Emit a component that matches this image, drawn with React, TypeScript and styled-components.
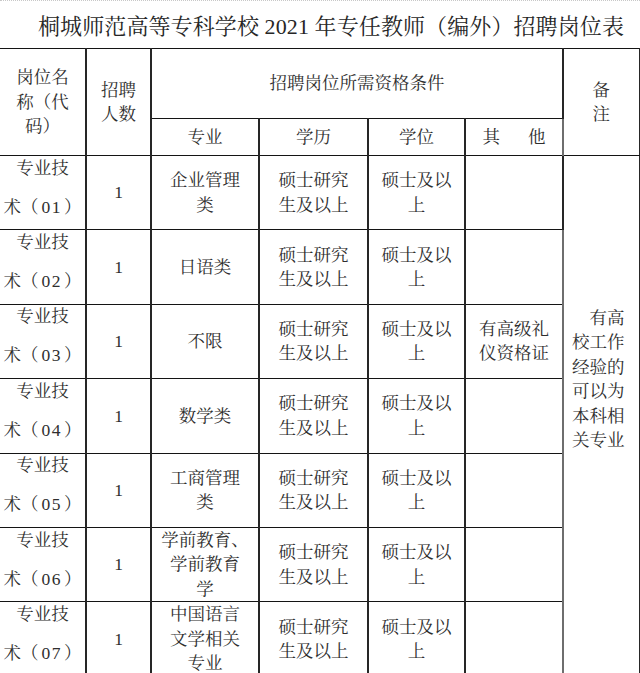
import React from 'react';
import styled, { createGlobalStyle } from 'styled-components';

const GlobalStyle = createGlobalStyle`
  html, body {
    margin: 0;
    padding: 0;
    background: #ffffff;
    overflow: hidden;
  }
  body {
    font-family: "Liberation Serif", "Noto Serif CJK SC", "Noto Sans CJK SC", serif;
    color: #2a2a2a;
    text-spacing-trim: space-all;
  }
`;

const Page = styled.div`
  width: 640px;
  height: 673px;
  overflow: hidden;
  border-top: 1px dotted #c8c8c8;
  box-sizing: border-box;
`;

const Title = styled.h1`
  margin: 0;
  height: 47px;
  display: flex;
  align-items: center;
  justify-content: center;
  padding-left: 22px;
  font-size: 22px;
  font-weight: 400;
  color: #262626;
  letter-spacing: 0.1px;
`;

const Table = styled.table`
  margin-left: -2px;
  width: 640px;
  table-layout: fixed;
  border-collapse: collapse;
  font-size: 17.5px;
`;

const Cell = styled.td<{ $noteCol?: boolean }>`
  border-top: 1px solid #141414;
  border-bottom: 1px solid #141414;
  border-left: 2px solid #262626;
  border-right: 2px solid #262626;
  padding: 0 3px;
  text-align: center;
  vertical-align: middle;
  line-height: 24.5px;
  color: #2e2e2e;
  ${(p) => p.$noteCol && 'border-right: 1px solid #262626; border-left: 2px solid #6e6e6e;'}
`;

const CodeText = styled.div`
  line-height: 39px;
  margin: -12px -4px -2px;
  white-space: nowrap;
`;

const Digits = styled.span`
  letter-spacing: 1.5px;
  padding: 0 2px 0 3px;
`;

const NoteCell = styled.td`
  border: 1px solid #262626;
  border-left: 2px solid #6e6e6e;
  padding: 150px 8px 0 8px;
  vertical-align: top;
  text-align: left;
  line-height: 24.4px;
  text-indent: 1em;
  color: #2e2e2e;
`;

const Row = styled.tr<{ $h: number }>`
  height: ${(p) => p.$h}px;
`;

const Gap = styled.span`
  display: inline-block;
  width: 28px;
`;

const rows = [
  { code: '01', major: ['企业管理', '类'], other: null },
  { code: '02', major: ['日语类'], other: null },
  { code: '03', major: ['不限'], other: ['有高级礼', '仪资格证'] },
  { code: '04', major: ['数学类'], other: null },
  { code: '05', major: ['工商管理', '类'], other: null },
  { code: '06', major: ['学前教育、', '学前教育', '学'], other: null },
  { code: '07', major: ['中国语言', '文学相关', '专业'], other: null },
];

const Lines = ({ items }: { items: string[] }) => (
  <>
    {items.map((t, i) => (
      <React.Fragment key={i}>
        {i > 0 && <br />}
        {t}
      </React.Fragment>
    ))}
  </>
);

const App = () => {
  return (
    <Page>
      <GlobalStyle />
      <Title>桐城师范高等专科学校 2021 年专任教师（编外）招聘岗位表</Title>
      <Table>
        <colgroup>
          <col style={{ width: 87 }} />
          <col style={{ width: 65 }} />
          <col style={{ width: 108 }} />
          <col style={{ width: 109 }} />
          <col style={{ width: 97 }} />
          <col style={{ width: 98 }} />
          <col style={{ width: 76 }} />
        </colgroup>
        <tbody>
          <Row $h={70}>
            <Cell rowSpan={2}>
              <Lines items={['岗位名', '称（代', '码）']} />
            </Cell>
            <Cell rowSpan={2}>
              <Lines items={['招聘', '人数']} />
            </Cell>
            <Cell colSpan={4}>招聘岗位所需资格条件</Cell>
            <Cell rowSpan={2} $noteCol>
              <Lines items={['备', '注']} />
            </Cell>
          </Row>
          <Row $h={37}>
            <Cell>专业</Cell>
            <Cell>学历</Cell>
            <Cell>学位</Cell>
            <Cell>
              其<Gap />他
            </Cell>
          </Row>
          {rows.map((r, i) => (
            <Row key={r.code} $h={74.4}>
              <Cell>
                <CodeText>
                  专业技
                  <br />
                  术（<Digits>{r.code}</Digits>）
                </CodeText>
              </Cell>
              <Cell>1</Cell>
              <Cell>
                <Lines items={r.major} />
              </Cell>
              <Cell>
                <Lines items={['硕士研究', '生及以上']} />
              </Cell>
              <Cell>
                <Lines items={['硕士及以', '上']} />
              </Cell>
              <Cell>{r.other && <Lines items={r.other} />}</Cell>
              {i === 0 && (
                <NoteCell rowSpan={rows.length}>
                  有高校工作经验的可以为本科相关专业
                </NoteCell>
              )}
            </Row>
          ))}
        </tbody>
      </Table>
    </Page>
  );
};

export default App;
